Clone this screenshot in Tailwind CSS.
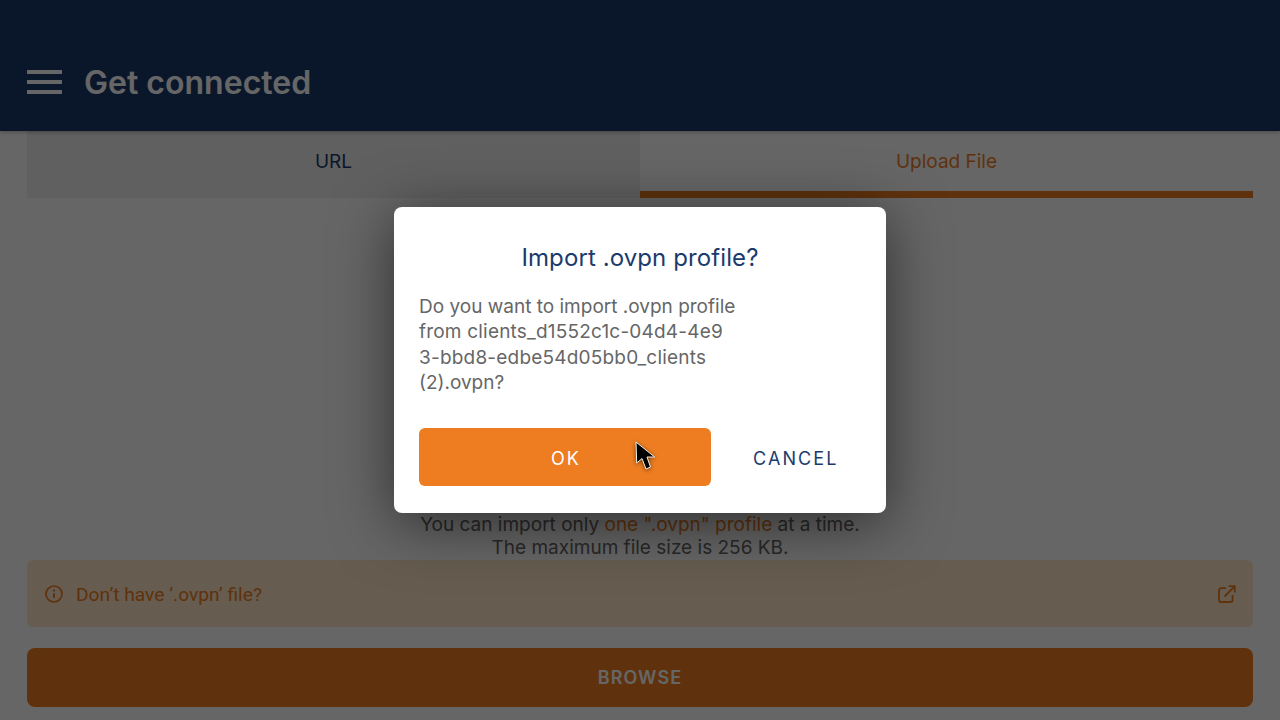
<!DOCTYPE html>
<html lang="en">
<head>
  <meta charset="UTF-8" />
  <meta name="viewport" content="width=device-width, initial-scale=1.0" />
  <title>Get connected</title>
  <script src="https://cdn.jsdelivr.net/npm/@tailwindcss/browser@4"></script>
</head>
<body class="relative h-[720px] w-[1280px] overflow-hidden bg-white font-['Inter',sans-serif]">
  <!-- header -->
  <header class="relative z-10 flex h-[131px] items-end gap-[22px] bg-[#1a3b6c] pb-[25px] pl-[27px] shadow-[0_1px_4px_rgba(0,0,0,0.3)]">
    <div class="mb-[12px] flex w-[35px] flex-col gap-[6px]">
      <span class="h-[4px] bg-white"></span>
      <span class="h-[4px] bg-white"></span>
      <span class="h-[4px] bg-white"></span>
    </div>
    <h1 class="text-[32px] leading-[46px] font-semibold tracking-[0.02px] text-white">Get connected</h1>
  </header>

  <main class="px-[27px]">
    <!-- tabs -->
    <div class="flex h-[67px] text-[19px]">
      <div class="flex flex-1 items-center justify-center bg-[#f0f0f0] pb-[4px] text-[#1a3b6c]">URL</div>
      <div class="flex flex-1 items-center justify-center border-b-[7px] border-[#ee7d21] pt-[2px] text-[#ee7d21]">Upload File</div>
    </div>

    <div class="mt-[315px] text-center text-[19px] leading-[23px] text-[#666666]">
      <p>You can import only <span class="text-[#ee7d21]">one ".ovpn" profile</span> at a time.</p>
      <p>The maximum file size is 256 KB.</p>
    </div>

    <!-- info row -->
    <div class="mt-[1px] flex h-[67px] items-center justify-between rounded-[6px] bg-[#ffe6c8] pr-[17px] pl-[18px] text-[#ee7d21]">
      <div class="flex items-center gap-[13px]">
        <svg class="mt-[2px] h-[18px] w-[18px]" viewBox="0 0 18 18" fill="none" stroke="currentColor" stroke-width="1.7">
          <circle cx="9" cy="9" r="8" />
          <path d="M9 8.2v4.6" stroke-width="2" />
          <path d="M9 4.6v2" stroke-width="2" />
        </svg>
        <span class="pt-[3px] font-['Roboto',sans-serif] text-[19.2px]">Don’t have ‘.ovpn’ file?</span>
      </div>
      <svg class="h-[18px] w-[18px]" viewBox="0 0 18 18" fill="none" stroke="currentColor" stroke-width="1.8">
        <path d="M8 3.2H3a2 2 0 0 0-2 2V15a2 2 0 0 0 2 2h9.6a2 2 0 0 0 2-2v-5" />
        <path d="M6.5 11.5 16.5 1.5" />
        <path d="M10.5 1.2h6.3v6.3" />
      </svg>
    </div>

    <button class="mt-[21px] h-[59px] w-full rounded-[8px] bg-[#ee7d21] text-[18px] font-semibold tracking-[1.1px] text-white">BROWSE</button>
  </main>

  <!-- backdrop + dialog -->
  <div class="absolute inset-0 z-20 bg-black/60"></div>
  <div class="absolute top-[207px] left-[394px] z-30 h-[306px] w-[492px] rounded-[8px] bg-white px-[25px] pt-[34px] shadow-[0_10px_60px_rgba(0,0,0,0.55)]">
    <h2 class="text-center text-[24px] leading-[34px] tracking-[0.1px] text-[#1a3b6c]">Import .ovpn profile?</h2>
    <p class="mt-[19px] text-[19px] leading-[25.3px] text-[#666666]">Do you want to import .ovpn profile<br /><span class="tracking-[0.2px]">from clients_d1552c1c-04d4-4e9<br />3-bbd8-edbe54d05bb0_clients</span><br />(2).ovpn?</p>
    <div class="mt-[33px] flex items-center">
      <button class="h-[58px] w-[292px] rounded-[6px] bg-[#ee7d21] pt-[2px] pl-[2px] text-[18px] tracking-[2px] text-white">OK</button>
      <button class="ml-[42px] pt-[2px] text-[18px] tracking-[2.1px] text-[#1a3b6c]">CANCEL</button>
    </div>
  </div>

  <!-- mouse pointer -->
  <svg class="absolute top-[440px] left-[634px] z-40 h-[32px] w-[22px] drop-shadow-[0_1px_2px_rgba(0,0,0,0.5)]" viewBox="0 0 22 32">
    <path d="M2 2 2.7 23 8 18.5 12 29 16.5 27 13 17 20.7 17Z" fill="#000" stroke="#f4efe6" stroke-width="1" />
  </svg>
</body>
</html>
